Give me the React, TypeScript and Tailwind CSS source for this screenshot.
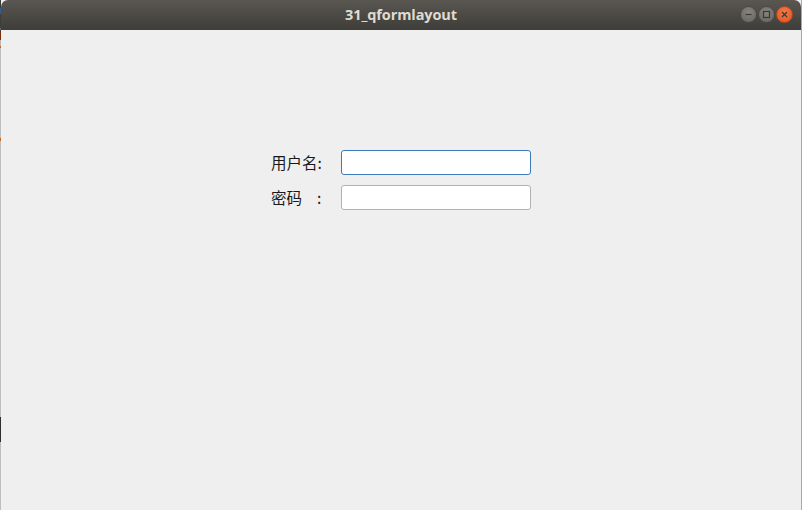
import React from 'react';

function WinButton({ kind }: { kind: 'min' | 'max' | 'close' }) {
  const isClose = kind === 'close';
  return (
    <div
      className={
        'w-[17px] h-[17px] rounded-full flex items-center justify-center border ' +
        (isClose
          ? 'bg-[radial-gradient(circle_at_50%_35%,#f47a4a,#e2521c)] border-[#b8461c]'
          : 'bg-[radial-gradient(circle_at_50%_35%,#86847f,#65635e)] border-[#4a4945]')
      }
    >
      <svg width="9" height="9" viewBox="0 0 9 9" fill="none" stroke="#3a3935" strokeWidth="1.2">
        {kind === 'min' && <path d="M1.5 4.5h6" />}
        {kind === 'max' && <rect x="1.5" y="1.5" width="6" height="6" />}
        {kind === 'close' && <path d="M2 2l5 5M7 2l-5 5" />}
      </svg>
    </div>
  );
}

export default function App() {
  return (
    <div className="w-[802px] h-[510px] flex bg-[#efefef] overflow-hidden font-['Noto_Sans','Noto_Sans_CJK_SC',sans-serif]">
      {/* desktop sliver on the left */}
      <div className="w-px flex flex-col">
        <div className="h-[8px] bg-[#3e3d39]" />
        <div className="h-[6px] bg-[#2f5f9a]" />
        <div className="h-[14px] bg-[#3e3d39]" />
        <div className="h-[2px] bg-[#3a6fb0]" />
        <div className="h-[10px] bg-[#7a2e08]" />
        <div className="h-[6px] bg-[#b8b8b8]" />
        <div className="h-[2px] bg-[#c06a2a]" />
        <div className="h-[90px] bg-[#bdbdbd]" />
        <div className="h-[3px] bg-[#c06a2a]" />
        <div className="h-[276px] bg-[#bdbdbd]" />
        <div className="h-[25px] bg-[#2e2e2e]" />
        <div className="flex-1 bg-[#bdbdbd]" />
      </div>

      <div className="flex-1 flex flex-col border-r border-[#a8a8a8]">
        <div className="h-[30px] shrink-0 rounded-t-[7px] bg-gradient-to-b from-[#5a5751] to-[#3e3d39] flex items-center relative">
          <div className="flex-1 text-center text-[14.5px] font-bold text-[#dfdbd2] font-['Open_Sans','DejaVu_Sans',sans-serif] tracking-[-0.1px]">
            31_qformlayout
          </div>
          <div className="absolute right-[8px] top-[6px] flex gap-[1px]">
            <WinButton kind="min" />
            <WinButton kind="max" />
            <WinButton kind="close" />
          </div>
        </div>

        <div className="flex-1 pt-[120px] pl-[270px]">
          <div className="grid w-fit grid-cols-[52px_190px] gap-x-[18px] gap-y-[10px] text-[15.5px] text-[#1a1a1a] font-['Noto_Sans_CJK_SC',sans-serif]">
            <div className="h-[25px] flex items-center">用户名:</div>
            <input className="h-[25px] w-[190px] rounded-[3px] border border-[#3d7ab8] bg-white outline-none" />
            <div className="h-[25px] flex items-center">
              <span>密码</span>
              <span className="ml-[15px]">:</span>
            </div>
            <input className="h-[25px] w-[190px] rounded-[3px] border border-[#b2b2b2] bg-white outline-none" />
          </div>
        </div>
      </div>
    </div>
  );
}
